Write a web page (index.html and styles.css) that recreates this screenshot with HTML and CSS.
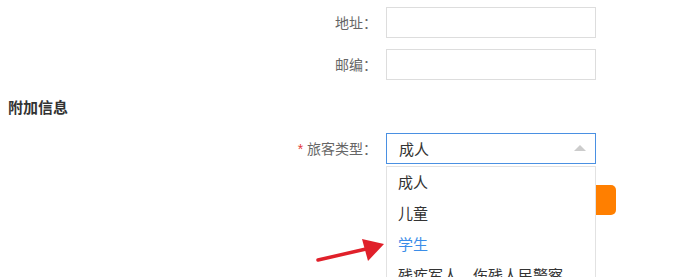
FILE: index.html
```html
<html lang="en">
<head>
    <meta charset="UTF-8">
    <title>附加信息</title>
    <link rel="stylesheet" href="styles.css">
</head>
<body>
    <form class="form">
        <div class="row">
            <label class="label">地址：</label>
            <input class="input" type="text">
        </div>
        <div class="row">
            <label class="label">邮编：</label>
            <input class="input" type="text">
        </div>

        <h3 class="section_title">附加信息</h3>

        <div class="row">
            <label class="label"><span class="star">*</span> 旅客类型：</label>
            <div class="select_wrap">
                <div class="select">
                    <span>成人</span>
                    <span class="caret"></span>
                </div>
                <ul class="dropdown">
                    <li>成人</li>
                    <li>儿童</li>
                    <li class="active">学生</li>
                    <li>残疾军人、伤残人民警察</li>
                </ul>
            </div>
        </div>

        <div class="row btn_row">
            <button class="btn" type="button">提交</button>
        </div>
    </form>

    <svg class="arrow" width="80" height="30" viewBox="0 0 80 30">
        <line x1="2" y1="24" x2="50" y2="13" stroke="#e0202a" stroke-width="3.5" stroke-linecap="round"/>
        <polygon points="46,3 68,8 52,25" fill="#e0202a"/>
    </svg>
</body>
</html>
```

FILE: styles.css
```css
body{
    margin: 0;
    font-family: "Liberation Sans", "Noto Sans CJK SC", sans-serif;
    font-size: 14px;
    color: #333;
    background: #fff;
    position: relative;
    overflow: hidden;
    height: 277px;
}
.form{
    padding-top: 7px;
}
.row{
    display: flex;
    align-items: center;
    height: 30px;
    margin-bottom: 12px;
}
.label{
    width: 386px;
    padding-right: 9px;
    text-align: right;
    color: #666;
    font-size: 14px;
    box-sizing: border-box;
    flex-shrink: 0;
}
.star{
    color: #e4393c;
}
.input{
    width: 210px;
    height: 31px;
    border: 1px solid #ddd;
    box-sizing: border-box;
    outline: none;
}
.section_title{
    margin: 0;
    padding: 5px 0 0 8px;
    height: 42px;
    font-size: 15px;
    font-weight: bold;
    color: #333;
    box-sizing: border-box;
}
.select_wrap{
    position: relative;
    width: 210px;
    height: 31px;
}
.select{
    height: 31px;
    border: 1px solid #4a90e2;
    box-sizing: border-box;
    display: flex;
    align-items: center;
    justify-content: space-between;
    padding: 0 9px 0 12px;
    font-size: 15px;
    color: #333;
}
.caret{
    width: 0;
    height: 0;
    border-left: 6px solid transparent;
    border-right: 6px solid transparent;
    border-bottom: 6px solid #ccc;
}
.dropdown{
    position: absolute;
    top: 33px;
    left: 0;
    width: 210px;
    margin: 0;
    padding: 0;
    list-style: none;
    background: #fff;
    border: 1px solid #e2e2e2;
    box-sizing: border-box;
    z-index: 2;
}
.dropdown li{
    height: 31px;
    line-height: 31px;
    padding-left: 11px;
    font-size: 15px;
    color: #333;
    white-space: nowrap;
}
.dropdown li:first-child{
    margin-top: 0;
}
.dropdown li.active{
    color: #3b8de8;
}
.btn_row{
    padding-left: 386px;
    margin-top: 22px;
}
.btn{
    width: 230px;
    height: 30px;
    border: none;
    border-radius: 5px;
    background: #ff7f00;
    color: #fff;
    font-size: 14px;
}
.arrow{
    position: absolute;
    left: 316px;
    top: 236px;
}
```
